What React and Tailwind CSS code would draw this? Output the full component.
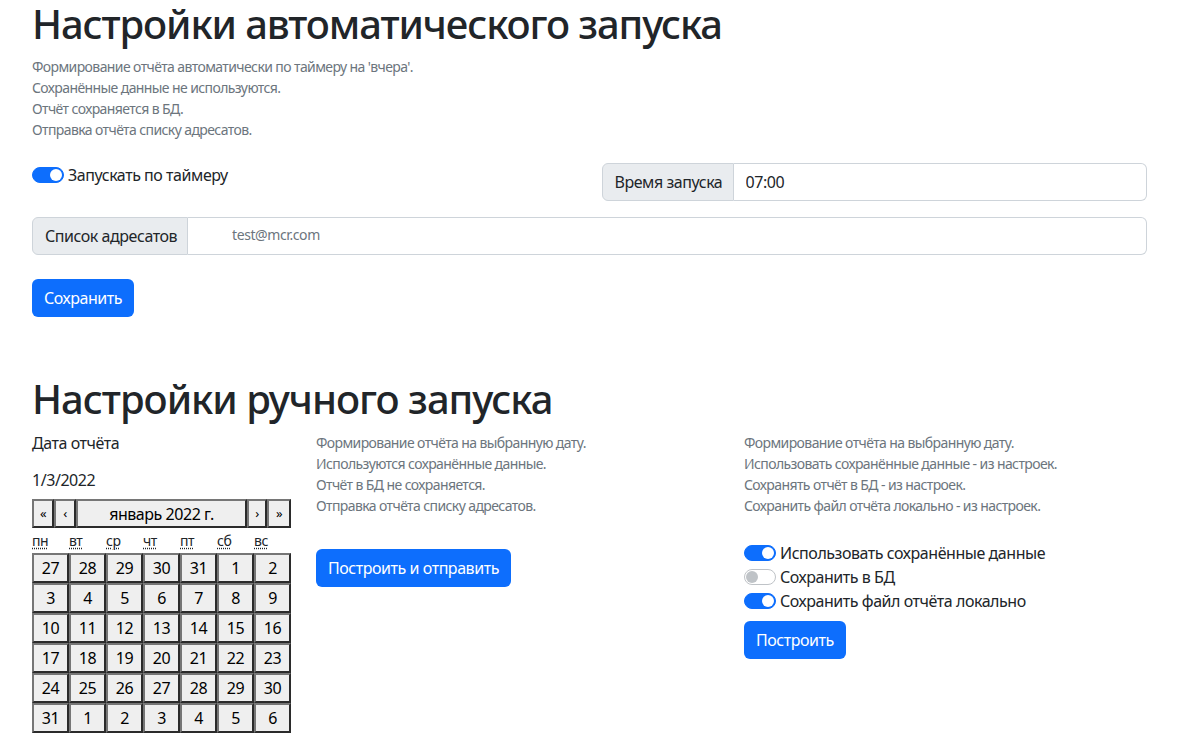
const Switch = ({ on }) => (
  <span
    className={
      "relative inline-block w-[32px] h-[16px] rounded-full border shrink-0 " +
      (on ? "bg-[#0d6efd] border-[#0d6efd]" : "bg-white border-[#bfc3c7]")
    }
  >
    <span
      className={
        "absolute top-[1px] w-[12px] h-[12px] rounded-full " +
        (on ? "right-[1px] bg-white" : "left-[1px] bg-[#bfc3c7]")
      }
    />
  </span>
);

const SwitchRow = ({ on, label }) => (
  <label className="flex items-center gap-[4px] h-[24px] text-[16px] tracking-[-0.45px] text-[#212529]">
    <Switch on={on} />
    <span>{label}</span>
  </label>
);

const Muted = ({ lines }) => (
  <div className="text-[14px] leading-[21px] tracking-[-0.6px] text-[#6c757d]">
    {lines.map((l) => (
      <div key={l}>{l}</div>
    ))}
  </div>
);

const BlueButton = ({ children }) => (
  <button className="h-[38px] px-[12px] rounded-[6px] bg-[#0d6efd] text-white text-[16px] leading-[24px] tracking-[-0.45px]">
    {children}
  </button>
);

const calBtn =
  "h-full bg-[#efefef] border-2 border-t-[#767676] border-l-[#767676] border-b-[#2b2b2b] border-r-[#2b2b2b] text-[#000]";

const weeks = [
  [27, 28, 29, 30, 31, 1, 2],
  [3, 4, 5, 6, 7, 8, 9],
  [10, 11, 12, 13, 14, 15, 16],
  [17, 18, 19, 20, 21, 22, 23],
  [24, 25, 26, 27, 28, 29, 30],
  [31, 1, 2, 3, 4, 5, 6],
];

const Calendar = () => (
  <div className="w-[259px]">
    <div className="flex h-[29px] text-[16px] tracking-[-0.45px]">
      <button className={calBtn + " w-[22px] text-[13px]"}>«</button>
      <button className={calBtn + " w-[22px] text-[13px]"}>‹</button>
      <button className={calBtn + " flex-1"}>январь 2022 г.</button>
      <button className={calBtn + " w-[20px] text-[13px]"}>›</button>
      <button className={calBtn + " w-[24px] text-[13px]"}>»</button>
    </div>
    <div className="grid grid-cols-7 h-[25px] items-center text-[14px] tracking-[-0.4px] text-[#212529]">
      {["пн", "вт", "ср", "чт", "пт", "сб", "вс"].map((d) => (
        <abbr key={d} className="underline decoration-dotted underline-offset-2">
          {d}
        </abbr>
      ))}
    </div>
    <div className="grid grid-cols-7 text-[16px] tracking-[-0.45px]">
      {weeks.flat().map((d, i) => (
        <div key={i} className="h-[30px]">
          <button className={calBtn + " w-full"}>{d}</button>
        </div>
      ))}
    </div>
  </div>
);

export default function App() {
  return (
    <div className="bg-white min-h-[751px] px-[32px] text-[#212529] font-['Segoe_UI','Noto_Sans',sans-serif]">
      <h1 className="text-[40px] leading-[48px] font-medium tracking-[-1.1px]">Настройки автоматического запуска</h1>
      <div className="mt-[8px]">
        <Muted
          lines={[
            "Формирование отчёта автоматически по таймеру на 'вчера'.",
            "Сохранённые данные не используются.",
            "Отчёт сохраняется в БД.",
            "Отправка отчёта списку адресатов.",
          ]}
        />
      </div>

      <div className="mt-[23px] grid grid-cols-2 gap-x-[24px] w-[1115px]">
        <div>
          <SwitchRow on label="Запускать по таймеру" />
        </div>
        <div className="flex h-[38px] text-[16px] tracking-[-0.45px]">
          <span className="flex items-center whitespace-nowrap px-[12px] bg-[#e9ecef] border border-[#ced4da] rounded-l-[6px] w-[132px]">
            Время запуска
          </span>
          <input
            readOnly
            value="07:00"
            className="flex-1 min-w-0 border border-l-0 border-[#ced4da] rounded-r-[6px] px-[12px] text-[#212529] outline-none"
          />
        </div>
      </div>

      <div className="mt-[16px] flex h-[38px] w-[1115px] text-[16px] tracking-[-0.45px]">
        <span className="flex items-center whitespace-nowrap px-[12px] bg-[#e9ecef] border border-[#ced4da] rounded-l-[6px] w-[156px]">
          Список адресатов
        </span>
        <input
          readOnly
          value="test@mcr.com"
          className="flex-1 min-w-0 border border-l-0 border-[#ced4da] rounded-r-[6px] pl-[44px] pb-[4px] text-[14px] tracking-[-0.4px] text-[#6c757d] outline-none"
        />
      </div>

      <div className="mt-[24px]">
        <BlueButton>Сохранить</BlueButton>
      </div>

      <h1 className="mt-[58px] text-[40px] leading-[48px] font-medium tracking-[-1px]">Настройки ручного запуска</h1>

      <div className="mt-[8px] flex">
        <div className="w-[284px] shrink-0 text-[16px] tracking-[-0.45px]">
          <div className="leading-[24px]">Дата отчёта</div>
          <div className="mt-[13px] leading-[24px]">1/3/2022</div>
          <div className="mt-[7px]">
            <Calendar />
          </div>
        </div>
        <div className="w-[428px] shrink-0 pt-[1px]">
          <Muted
            lines={[
              "Формирование отчёта на выбранную дату.",
              "Используются сохранённые данные.",
              "Отчёт в БД не сохраняется.",
              "Отправка отчёта списку адресатов.",
            ]}
          />
          <div className="mt-[33px]">
            <BlueButton>Построить и отправить</BlueButton>
          </div>
        </div>
        <div className="flex-1 pt-[1px]">
          <Muted
            lines={[
              "Формирование отчёта на выбранную дату.",
              "Использовать сохранённые данные - из настроек.",
              "Сохранять отчёт в БД - из настроек.",
              "Сохранить файл отчёта локально - из настроек.",
            ]}
          />
          <div className="mt-[25px]">
            <SwitchRow on label="Использовать сохранённые данные" />
            <SwitchRow on={false} label="Сохранить в БД" />
            <SwitchRow on label="Сохранить файл отчёта локально" />
          </div>
          <div className="mt-[8px]">
            <BlueButton>Построить</BlueButton>
          </div>
        </div>
      </div>
    </div>
  );
}
